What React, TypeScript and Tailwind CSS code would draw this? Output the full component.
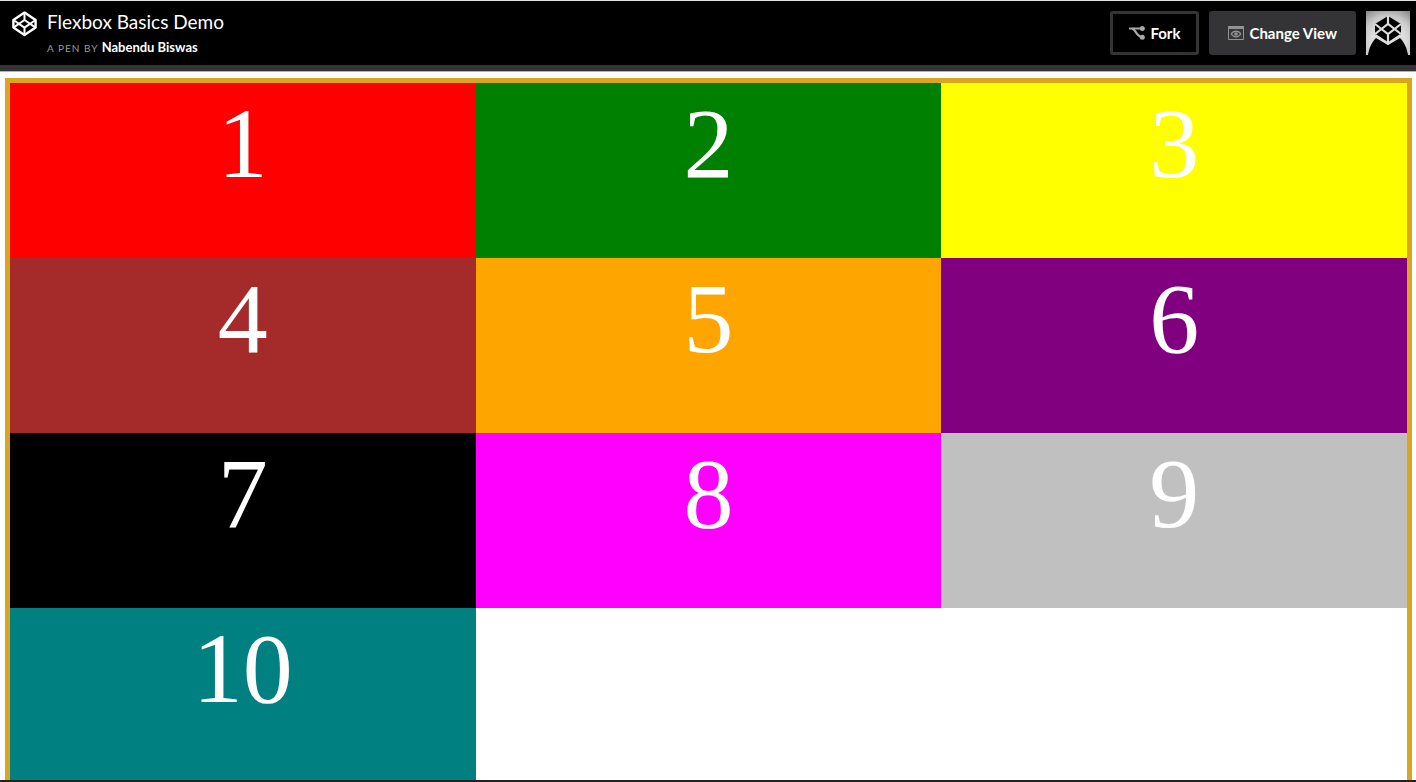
interface Box {
  label: string;
  color: string;
}

const boxes: Box[] = [
  { label: '1', color: 'bg-[#ff0000]' },
  { label: '2', color: 'bg-[#008000]' },
  { label: '3', color: 'bg-[#ffff00]' },
  { label: '4', color: 'bg-[#a52a2a]' },
  { label: '5', color: 'bg-[#ffa500]' },
  { label: '6', color: 'bg-[#800080]' },
  { label: '7', color: 'bg-[#000000]' },
  { label: '8', color: 'bg-[#ff00ff]' },
  { label: '9', color: 'bg-[#c0c0c0]' },
  { label: '10', color: 'bg-[#008080]' },
];

function Logo() {
  return (
    <svg width="26" height="26" viewBox="0 0 26 26" fill="none" stroke="#fff" strokeWidth="2.4" strokeLinejoin="round" aria-hidden="true">
      <path d="M13.5 1.6L24.6 9V16.6L13.5 24L2.4 16.6V9Z" />
      <path d="M13.5 1.6V9M13.5 16.6V24M2.4 9L13.5 16.6L24.6 9M2.4 16.6L13.5 9L24.6 16.6" strokeWidth="2" />
    </svg>
  );
}

function ForkIcon() {
  return (
    <svg width="16" height="14" viewBox="0 0 16 14" fill="none" aria-hidden="true">
      <path d="M0 2.5H13" stroke="#a9a9a9" strokeWidth="2" />
      <path d="M3 2.5C7 3.5 7 10.5 13 11" stroke="#a9a9a9" strokeWidth="2.2" />
      <circle cx="13.3" cy="2.6" r="2.5" fill="#a9a9a9" />
      <circle cx="13.3" cy="11.2" r="2.5" fill="#a9a9a9" />
    </svg>
  );
}

function ViewIcon() {
  return (
    <svg width="16" height="14" viewBox="0 0 16 14" fill="none" aria-hidden="true">
      <path d="M0.5 0.5H15.5V13.5H0.5Z" stroke="#929294" />
      <path d="M0 0H16V3H0Z" fill="#929294" />
      <path d="M3.2 8C5.5 4.3 10.5 4.3 12.8 8C10.5 11.7 5.5 11.7 3.2 8Z" stroke="#929294" strokeWidth="1.3" />
      <circle cx="8" cy="8" r="1.8" fill="#929294" />
    </svg>
  );
}

function Avatar() {
  return (
    <svg width="44" height="44" viewBox="0 0 44 44" fill="none" role="img" aria-label="Profile">
      <defs>
        <radialGradient id="glow" cx="22" cy="30" r="36" gradientUnits="userSpaceOnUse">
          <stop offset="0.45" stopColor="#dedede" />
          <stop offset="0.7" stopColor="#c8c8c8" />
          <stop offset="1" stopColor="#8c8c8c" />
        </radialGradient>
      </defs>
      <path d="M0 0H44V44H0Z" fill="url(#glow)" />
      <path d="M2 44C3 37 6 31 10 27L22 34L34 27C38 31 41 37 42 44Z" fill="#000" />
      <path d="M22 5L35 13V24L22 32L9 24V13Z" fill="#000" />
      <path d="M22 5V13M22 23V32M9 13L22 23L35 13M9 23L22 13L35 23" stroke="#dedede" strokeWidth="2.2" />
      <path d="M9 24L22 32.5L35 24" stroke="#dedede" strokeWidth="2.4" />
    </svg>
  );
}

export default function App() {
  return (
    <div className="flex h-screen flex-col overflow-hidden bg-white">
      <header className="flex shrink-0 items-start justify-between border-t border-[#dfe6e2] bg-black pt-[10px] pr-[6px] pl-[11px] font-['Lato',sans-serif]">
        <div className="flex gap-[10px]">
          <a href="#home" aria-label="Home">
            <Logo />
          </a>
          <div>
            <h1 className="text-[19px] leading-[22px] text-white">Flexbox Basics Demo</h1>
            <p className="mt-1 text-[10px] leading-5 tracking-widest text-[#999999]">
              A PEN BY{' '}
              <a href="#author" className="text-[13px] font-bold tracking-normal text-white">
                Nabendu Biswas
              </a>
            </p>
          </div>
        </div>
        <div className="flex gap-[10px] pb-[10px]">
          <button className="flex h-11 items-center gap-[5px] rounded-[3px] border-3 border-[#343436] px-4 text-[15px] font-bold text-white">
            <ForkIcon />
            Fork
          </button>
          <button className="flex h-11 items-center gap-[5px] rounded-[3px] border-3 border-[#343436] bg-[#343436] px-4 text-[15px] font-bold text-white">
            <ViewIcon />
            Change View
          </button>
          <a href="#profile">
            <Avatar />
          </a>
        </div>
      </header>
      <div className="h-[7px] shrink-0 border-b border-[#b5b0b3] bg-[#343436]" />

      <main className="mt-[6px] mr-1 ml-[5px] grid min-h-0 flex-1 auto-rows-[175px] grid-cols-3 overflow-hidden border-x-5 border-t-5 border-[#daa520]">
        {boxes.map((box) => (
          <div
            key={box.label}
            className={`${box.color} pt-[3px] text-center font-['Liberation_Serif',serif] text-[100px] leading-[115px] text-white`}
          >
            {box.label}
          </div>
        ))}
      </main>
      <div className="h-[2px] shrink-0 bg-[#222224]" />
    </div>
  );
}
